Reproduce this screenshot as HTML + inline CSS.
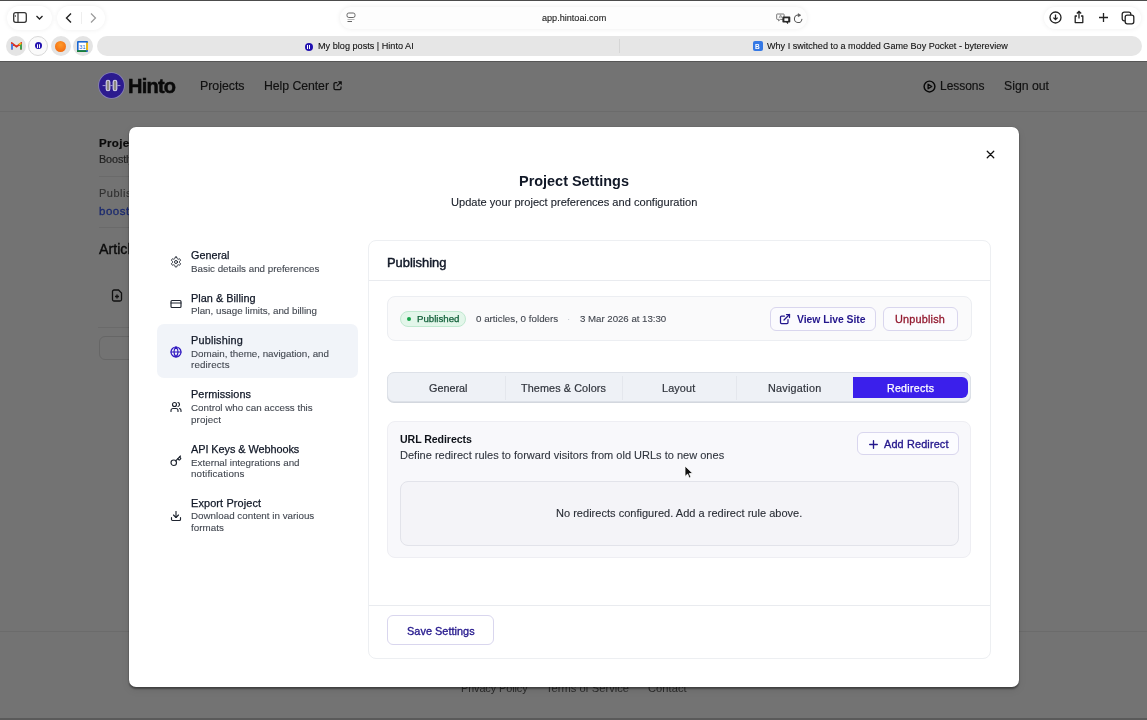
<!DOCTYPE html>
<html><head><meta charset="utf-8">
<style>
*{box-sizing:border-box;margin:0;padding:0}
html,body{width:1147px;height:720px;overflow:hidden;background:#737373;font-family:"Liberation Sans",sans-serif}
body{position:relative}
.t{position:absolute;white-space:nowrap;line-height:1;will-change:transform}
svg{display:block}
</style></head><body>
<div style="position:absolute;left:0;top:0;width:1147px;height:61px;background:#fff"></div>
<div style="position:absolute;left:0;top:0;width:1147px;height:1px;background:#4c4c4c"></div>
<div style="position:absolute;left:0;top:61px;width:1147px;height:1px;background:#565656"></div>
<div style="position:absolute;left:7px;top:6px;width:45px;height:24px;border-radius:12px;background:#fff;box-shadow:0 0 5px rgba(0,0,0,.07)"></div>
<div style="position:absolute;left:57px;top:6px;width:48px;height:24px;border-radius:12px;background:#fff;box-shadow:0 0 5px rgba(0,0,0,.07)"></div>
<div style="position:absolute;left:340px;top:7px;width:467px;height:22px;border-radius:11px;background:#fdfdfd;box-shadow:0 0 5px rgba(0,0,0,.08)"></div>
<div style="position:absolute;left:1044px;top:7px;width:97px;height:22px;border-radius:11px;background:#fff;box-shadow:0 0 5px rgba(0,0,0,.07)"></div>
<svg style="position:absolute;left:12px;top:11px;" width="16" height="13" viewBox="0 0 16 13" fill="none"><rect x="1.7" y="1.7" width="12.6" height="9.6" rx="2" stroke="#333" stroke-width="1.3"/><line x1="6" y1="2" x2="6" y2="11" stroke="#333" stroke-width="1.2"/><line x1="3.3" y1="4" x2="3.3" y2="6" stroke="#333" stroke-width=".8"/></svg>
<svg style="position:absolute;left:35px;top:14px;" width="9" height="7" viewBox="0 0 9 7" fill="none"><path d="M1.5 2l3 3 3-3" stroke="#222" stroke-width="1.3" fill="none"/></svg>
<svg style="position:absolute;left:64px;top:12px;" width="9" height="12" viewBox="0 0 9 12" fill="none"><path d="M7 1.5L2.5 6 7 10.5" stroke="#222" stroke-width="1.4" fill="none"/></svg>
<div style="position:absolute;left:81px;top:12px;width:1px;height:12px;background:#eee"></div>
<svg style="position:absolute;left:89px;top:12px;" width="9" height="12" viewBox="0 0 9 12" fill="none"><path d="M2 1.5L6.5 6 2 10.5" stroke="#999" stroke-width="1.2" fill="none"/></svg>
<svg style="position:absolute;left:346px;top:12px;" width="10" height="11" viewBox="0 0 10 11" fill="none"><rect x="1" y="1" width="8" height="4.5" rx="1.8" stroke="#666" stroke-width="1"/><line x1="1.5" y1="7.5" x2="8.5" y2="7.5" stroke="#aaa" stroke-width=".8"/><line x1="1.5" y1="9.5" x2="6" y2="9.5" stroke="#666" stroke-width="1"/></svg>
<div class="t" style="left:541.80px;top:14px;font-size:9.11px;color:#1a1a1a;-webkit-text-stroke:0.1px #1a1a1a;">app.hintoai.com</div>
<svg style="position:absolute;left:776px;top:12.5px;" width="15" height="11" viewBox="0 0 15 11" fill="none"><path d="M1.3 1h6.2a.6.6 0 0 1 .6.6v4.2a.6.6 0 0 1-.6.6H4.3L2.6 7.9V6.4H1.3a.6.6 0 0 1-.6-.6V1.6a.6.6 0 0 1 .6-.6z" stroke="#666" stroke-width=".9" fill="#fff"/><path d="M3 5.2l1.6-3.4 1.6 3.4M3.6 4h2" stroke="#666" stroke-width=".6" fill="none"/><path d="M7.2 3.6h6.3a.8.8 0 0 1 .8.8v4.4a.8.8 0 0 1-.8.8h-1.4v1.7l-1.9-1.7H7.2a.8.8 0 0 1-.8-.8V4.4a.8.8 0 0 1 .8-.8z" fill="#2a2a2a"/><rect x="8.4" y="5.3" width="3.8" height="2.6" fill="#fff"/></svg>
<svg style="position:absolute;left:792.5px;top:12.5px;" width="11" height="11" viewBox="0 0 11 11" fill="none"><path d="M8.9 6.2A3.75 3.75 0 1 1 5.5 2.1" stroke="#555" stroke-width="1.05" fill="none" stroke-linecap="round"/><path d="M5.2 0.6l2.6 1.6-2.6 1.6z" fill="#555" stroke="#555" stroke-width=".5" stroke-linejoin="round"/></svg>
<svg style="position:absolute;left:1049px;top:11px;" width="13" height="13" viewBox="0 0 13 13" fill="none"><circle cx="6.5" cy="6.5" r="5.5" stroke="#222" stroke-width="1.3"/><path d="M6.5 3.5v5M4.4 6.6l2.1 2.1 2.1-2.1" stroke="#222" stroke-width="1.3" fill="none"/></svg>
<svg style="position:absolute;left:1073px;top:10px;" width="12" height="14" viewBox="0 0 12 14" fill="none"><path d="M4 6H2.2v6.6h7.6V6H8" stroke="#222" stroke-width="1.3" fill="none" stroke-linejoin="round"/><path d="M6 8.5V1.5M3.8 3.5L6 1.3l2.2 2.2" stroke="#222" stroke-width="1.3" fill="none"/></svg>
<svg style="position:absolute;left:1098px;top:12px;" width="11" height="11" viewBox="0 0 11 11" fill="none"><path d="M5.5 1v9M1 5.5h9" stroke="#222" stroke-width="1.3"/></svg>
<svg style="position:absolute;left:1121px;top:11px;" width="14" height="14" viewBox="0 0 14 14" fill="none"><rect x="1.2" y="1.2" width="8.6" height="8.6" rx="2" stroke="#222" stroke-width="1.3"/><rect x="4.2" y="4.2" width="8.6" height="8.6" rx="2" fill="#fff" stroke="#222" stroke-width="1.3"/></svg>
<div style="position:absolute;left:6px;top:35.5px;width:20px;height:20px;border-radius:50%;background:#e4e4e4"></div>
<svg style="position:absolute;left:11px;top:41.5px;" width="11" height="8" viewBox="0 0 11 8" fill="none"><path d="M1 7.5V1.3l4.5 3.4L10 1.3v6.2" stroke="#d93025" stroke-width="1.8" fill="none"/><path d="M1 7.5V2" stroke="#4285f4" stroke-width="1.8"/><path d="M10 7.5V2" stroke="#34a853" stroke-width="1.8"/><path d="M10 1.3L8 2.8" stroke="#fbbc04" stroke-width="1.8"/></svg>
<div style="position:absolute;left:28px;top:35.5px;width:20px;height:20px;border-radius:50%;background:#fafafa;border:1px solid #d9d9d9"></div>
<div style="position:absolute;left:34.5px;top:41.8px;width:7.5px;height:7.5px;border-radius:50%;background:#2010b0"></div>
<div style="position:absolute;left:36.6px;top:43.6px;width:1.3px;height:4px;border-radius:1px;background:#fff"></div>
<div style="position:absolute;left:38.8px;top:43.6px;width:1.3px;height:4px;border-radius:1px;background:#fff"></div>
<div style="position:absolute;left:50.5px;top:35.5px;width:20px;height:20px;border-radius:50%;background:#e4e4e4"></div>
<div style="position:absolute;left:55px;top:40.5px;width:11px;height:11px;border-radius:50%;background:radial-gradient(circle at 50% 35%,#ff9a2a,#f0600a)"></div>
<div style="position:absolute;left:72.5px;top:35.5px;width:20px;height:20px;border-radius:50%;background:#e4e4e4"></div>
<svg style="position:absolute;left:77px;top:40.5px;" width="11" height="11" viewBox="0 0 11 11" fill="none"><rect x="0" y="0" width="11" height="11" rx="1" fill="#1967d2"/><rect x="1.6" y="1.6" width="7.6" height="7.6" fill="#fff"/><rect x="9.2" y="1.6" width="1.8" height="7.6" fill="#fbbc04"/><rect x="0" y="9.2" width="9.2" height="1.8" fill="#188038"/><text x="5.4" y="7.8" font-size="5.5" text-anchor="middle" fill="#1967d2" font-family="Liberation Sans">31</text></svg>
<div style="position:absolute;left:97px;top:35.5px;width:1045px;height:20.5px;border-radius:10.5px;background:#e6e6e6"></div>
<div style="position:absolute;left:619px;top:39px;width:1px;height:14px;background:#d6d6d6"></div>
<div style="position:absolute;left:304.7px;top:42.7px;width:8px;height:8px;border-radius:50%;background:#2010b0"></div>
<div style="position:absolute;left:306.9px;top:44.7px;width:1.2px;height:4px;background:#fff"></div>
<div style="position:absolute;left:309.2px;top:44.7px;width:1.2px;height:4px;background:#fff"></div>
<div class="t" style="left:317.70px;top:42px;font-size:9.14px;color:#111;-webkit-text-stroke:0.1px #111;">My blog posts | Hinto AI</div>
<div style="position:absolute;left:752.5px;top:41.2px;width:10.6px;height:10.2px;border-radius:2px;background:#3478e5"></div>
<div class="t" style="left:755.20px;top:44px;font-size:6.50px;color:#fff;font-weight:700;">B</div>
<div class="t" style="left:767.40px;top:42px;font-size:9.07px;color:#111;-webkit-text-stroke:0.1px #111;">Why I switched to a modded Game Boy Pocket - bytereview</div>
<div style="position:absolute;left:0;top:62px;width:1147px;height:656px;background:#737373"></div>
<div style="position:absolute;left:0;top:718px;width:1147px;height:2px;background:#5a5a5a"></div>
<div style="position:absolute;left:0;top:111px;width:1147px;height:1px;background:#6b6b6b"></div>
<div style="position:absolute;left:98.8px;top:73.3px;width:24.8px;height:24.8px;border-radius:50%;background:#2c1b8f;box-shadow:0 0 0 .8px #8780b8"></div>
<svg style="position:absolute;left:101px;top:77px;" width="21" height="17" viewBox="0 0 21 17" fill="none"><rect x="5.2" y="3.2" width="3.6" height="10.6" rx="1.8" fill="#8c8a80" stroke="#d8d4ee" stroke-width="1.1"/><rect x="12.2" y="3.2" width="3.6" height="10.6" rx="1.8" fill="#8c8a80" stroke="#d8d4ee" stroke-width="1.1"/><path d="M1.6 8.6h3.1M9.3 8.6h2.4M16.3 8.6h3.1" stroke="#a49fd0" stroke-width="1"/></svg>
<div class="t" style="left:128.30px;top:76px;font-size:20.00px;color:#0a0a0a;font-weight:700;letter-spacing:-0.774px;-webkit-text-stroke:0.5px #0a0a0a;">Hinto</div>
<div class="t" style="left:200.40px;top:80px;font-size:12.40px;color:#111;letter-spacing:-0.028px;-webkit-text-stroke:0.15px #111;">Projects</div>
<div class="t" style="left:264.00px;top:80px;font-size:12.30px;color:#111;letter-spacing:-0.063px;-webkit-text-stroke:0.15px #111;">Help Center</div>
<svg style="position:absolute;left:333px;top:80.8px;" width="10" height="10" viewBox="0 0 10 10" fill="none"><path d="M4.3 1.6H2.3a1.3 1.3 0 0 0-1.3 1.3v4.4a1.3 1.3 0 0 0 1.3 1.3h4.4a1.3 1.3 0 0 0 1.3-1.3V5.4" stroke="#111" stroke-width="1.3" fill="none"/><path d="M3.9 5.2L8 1.1" stroke="#111" stroke-width="1.2"/><path d="M5.4 0.6h3.1v3.1z" fill="#111" stroke="#111" stroke-width=".6" stroke-linejoin="round"/></svg>
<svg style="position:absolute;left:923.3px;top:80px;" width="13" height="13" viewBox="0 0 13 13" fill="none"><circle cx="6.5" cy="6.5" r="5.4" stroke="#0a0a0a" stroke-width="1.45"/><path d="M5.1 4.2v4.6l3.6-2.3z" stroke="#0a0a0a" stroke-width="1.3" fill="none" stroke-linejoin="round"/></svg>
<div class="t" style="left:939.80px;top:80px;font-size:12.00px;color:#111;letter-spacing:-0.033px;-webkit-text-stroke:0.15px #111;">Lessons</div>
<div class="t" style="left:1004.00px;top:80px;font-size:12.30px;color:#111;letter-spacing:-0.019px;-webkit-text-stroke:0.15px #111;">Sign out</div>
<div class="t" style="left:99.00px;top:138px;font-size:11.50px;color:#0a0a0a;font-weight:700;-webkit-text-stroke:0.2px #0a0a0a;letter-spacing:.35px;">Project Details</div>
<div class="t" style="left:99.00px;top:154px;font-size:10.80px;color:#202020;-webkit-text-stroke:0.15px #202020;letter-spacing:-.1px;">Boostly</div>
<div style="position:absolute;left:99px;top:176px;width:60px;height:1px;background:#6a6a6a"></div>
<div class="t" style="left:99.00px;top:188px;font-size:11.00px;color:#303030;-webkit-text-stroke:0.1px #303030;letter-spacing:.5px;">Published</div>
<div class="t" style="left:99.00px;top:206px;font-size:11.50px;color:#1b2a6e;-webkit-text-stroke:0.3px #1b2a6e;letter-spacing:.5px;">boostly</div>
<div style="position:absolute;left:99px;top:227px;width:60px;height:1px;background:#6a6a6a"></div>
<div class="t" style="left:99.00px;top:242px;font-size:14.20px;color:#0c0c0c;-webkit-text-stroke:0.4px #0c0c0c;">Articles</div>
<svg style="position:absolute;left:111px;top:289px;" width="12" height="13" viewBox="0 0 12 13" fill="none"><path d="M1.5 2.5a1.5 1.5 0 0 1 1.5-1.5h4.5l3 3v6.5a1.5 1.5 0 0 1-1.5 1.5H3a1.5 1.5 0 0 1-1.5-1.5z" stroke="#111" stroke-width="1.3" fill="none"/><path d="M6 5.5v4M4 7.5h4" stroke="#111" stroke-width="1.3"/></svg>
<div style="position:absolute;left:98px;top:327px;width:60px;height:1px;background:#6a6a6a"></div>
<div style="position:absolute;left:98.5px;top:336px;width:60px;height:24px;border-radius:6px;border:1px solid #666"></div>
<div style="position:absolute;left:0;top:631px;width:1147px;height:1px;background:#6b6b6b"></div>
<div class="t" style="left:461.30px;top:683px;font-size:10.90px;color:#2a2a2a;letter-spacing:-0.088px;">Privacy Policy</div>
<div class="t" style="left:545.90px;top:683px;font-size:11.10px;color:#2a2a2a;letter-spacing:0.023px;">Terms of Service</div>
<div class="t" style="left:647.80px;top:683px;font-size:11.10px;color:#2a2a2a;letter-spacing:0.058px;">Contact</div>
<div style="position:absolute;left:129px;top:126.5px;width:890px;height:560.5px;background:#fff;border-radius:7px;box-shadow:0 1.5px 2px rgba(0,0,0,.4),0 0 1px rgba(0,0,0,.35),0 3px 8px rgba(0,0,0,.08)"></div>
<svg style="position:absolute;left:984px;top:147.5px;" width="13" height="13" viewBox="0 0 24 24" fill="none"><path d="M18 6L6 18M6 6l12 12" stroke="#111" stroke-width="2.4" stroke-linecap="round"/></svg>
<div class="t" style="left:518.80px;top:174px;font-size:14.45px;color:#111827;font-weight:700;letter-spacing:-0.000px;">Project Settings</div>
<div class="t" style="left:450.60px;top:197px;font-size:11.08px;color:#1b202a;letter-spacing:0.001px;-webkit-text-stroke:0.12px #1b202a;">Update your project preferences and configuration</div>
<div style="position:absolute;left:157.3px;top:324.4px;width:201px;height:54.1px;border-radius:7px;background:#f1f4f9"></div>
<svg style="position:absolute;left:169.8px;top:255.8px;" width="12" height="12" viewBox="0 0 24 24" fill="none"><path d="M12.22 2h-.44a2 2 0 0 0-2 2v.18a2 2 0 0 1-1 1.73l-.43.25a2 2 0 0 1-2 0l-.15-.08a2 2 0 0 0-2.73.73l-.22.38a2 2 0 0 0 .73 2.73l.15.1a2 2 0 0 1 1 1.72v.51a2 2 0 0 1-1 1.74l-.15.09a2 2 0 0 0-.73 2.73l.22.38a2 2 0 0 0 2.73.73l.15-.08a2 2 0 0 1 2 0l.43.25a2 2 0 0 1 1 1.73V20a2 2 0 0 0 2 2h.44a2 2 0 0 0 2-2v-.18a2 2 0 0 1 1-1.73l.43-.25a2 2 0 0 1 2 0l.15.08a2 2 0 0 0 2.73-.73l.22-.39a2 2 0 0 0-.73-2.73l-.15-.08a2 2 0 0 1-1-1.74v-.5a2 2 0 0 1 1-1.74l.15-.09a2 2 0 0 0 .73-2.73l-.22-.38a2 2 0 0 0-2.73-.73l-.15.08a2 2 0 0 1-2 0l-.43-.25a2 2 0 0 1-1-1.73V4a2 2 0 0 0-2-2z" stroke="#1f2530" stroke-width="1.9" stroke-linecap="round" stroke-linejoin="round" fill="none"/><circle cx="12" cy="12" r="3" stroke="#1f2530" stroke-width="1.9" stroke-linecap="round" stroke-linejoin="round" fill="none"/></svg>
<svg style="position:absolute;left:169.9px;top:298.2px;" width="12" height="12" viewBox="0 0 24 24" fill="none"><rect x="2" y="5" width="20" height="14" rx="2" stroke="#1f2530" stroke-width="2.3" stroke-linecap="round" stroke-linejoin="round" fill="none"/><line x1="2" x2="22" y1="10" y2="10" stroke="#1f2530" stroke-width="2.3" stroke-linecap="round" stroke-linejoin="round" fill="none"/></svg>
<svg style="position:absolute;left:169.7px;top:346.4px;" width="12" height="12" viewBox="0 0 24 24" fill="none"><circle cx="12" cy="12" r="10" stroke="#2e16c0" stroke-width="2.4" stroke-linecap="round" stroke-linejoin="round" fill="none"/><path d="M12 2a14.5 14.5 0 0 0 0 20 14.5 14.5 0 0 0 0-20" stroke="#2e16c0" stroke-width="2.4" stroke-linecap="round" stroke-linejoin="round" fill="none"/><path d="M2 12h20" stroke="#2e16c0" stroke-width="2.4" stroke-linecap="round" stroke-linejoin="round" fill="none"/></svg>
<svg style="position:absolute;left:170px;top:400.7px;" width="12" height="12" viewBox="0 0 24 24" fill="none"><path d="M16 21v-2a4 4 0 0 0-4-4H6a4 4 0 0 0-4 4v2" stroke="#1f2530" stroke-width="2.3" stroke-linecap="round" stroke-linejoin="round" fill="none"/><circle cx="9" cy="7" r="4" stroke="#1f2530" stroke-width="2.3" stroke-linecap="round" stroke-linejoin="round" fill="none"/><path d="M22 21v-2a4 4 0 0 0-3-3.87" stroke="#1f2530" stroke-width="2.3" stroke-linecap="round" stroke-linejoin="round" fill="none"/><path d="M16 3.13a4 4 0 0 1 0 7.75" stroke="#1f2530" stroke-width="2.3" stroke-linecap="round" stroke-linejoin="round" fill="none"/></svg>
<svg style="position:absolute;left:169.7px;top:455px;" width="12" height="12" viewBox="0 0 24 24" fill="none"><path d="m15.5 7.5 2.3 2.3a1 1 0 0 0 1.4 0l2.1-2.1a1 1 0 0 0 0-1.4L19 4" stroke="#1f2530" stroke-width="2.3" stroke-linecap="round" stroke-linejoin="round" fill="none"/><path d="m21 2-9.6 9.6" stroke="#1f2530" stroke-width="2.3" stroke-linecap="round" stroke-linejoin="round" fill="none"/><circle cx="7.5" cy="15.5" r="5.5" stroke="#1f2530" stroke-width="2.3" stroke-linecap="round" stroke-linejoin="round" fill="none"/></svg>
<svg style="position:absolute;left:170px;top:509.5px;" width="12" height="12" viewBox="0 0 24 24" fill="none"><path d="M21 15v4a2 2 0 0 1-2 2H5a2 2 0 0 1-2-2v-4" stroke="#1f2530" stroke-width="2.3" stroke-linecap="round" stroke-linejoin="round" fill="none"/><polyline points="7 10 12 15 17 10" stroke="#1f2530" stroke-width="2.3" stroke-linecap="round" stroke-linejoin="round" fill="none"/><line x1="12" x2="12" y1="15" y2="3" stroke="#1f2530" stroke-width="2.3" stroke-linecap="round" stroke-linejoin="round" fill="none"/></svg>
<div class="t" style="left:191.25px;top:250px;font-size:10.80px;color:#111827;letter-spacing:0.013px;-webkit-text-stroke:0.25px #111827;">General</div>
<div class="t" style="left:191.25px;top:264px;font-size:9.80px;color:#41464f;letter-spacing:-0.002px;-webkit-text-stroke:0.1px #41464f;">Basic details and preferences</div>
<div class="t" style="left:191.25px;top:293px;font-size:10.90px;color:#111827;letter-spacing:0.029px;-webkit-text-stroke:0.25px #111827;">Plan &amp; Billing</div>
<div class="t" style="left:191.25px;top:306px;font-size:9.80px;color:#41464f;letter-spacing:-0.013px;-webkit-text-stroke:0.1px #41464f;">Plan, usage limits, and billing</div>
<div class="t" style="left:191.25px;top:335px;font-size:10.90px;color:#111827;letter-spacing:0.178px;-webkit-text-stroke:0.25px #111827;">Publishing</div>
<div class="t" style="left:191.25px;top:349px;font-size:9.80px;color:#41464f;letter-spacing:-0.013px;-webkit-text-stroke:0.1px #41464f;">Domain, theme, navigation, and</div>
<div class="t" style="left:191.25px;top:360px;font-size:9.80px;color:#41464f;letter-spacing:0.128px;-webkit-text-stroke:0.1px #41464f;">redirects</div>
<div class="t" style="left:191.25px;top:389px;font-size:10.90px;color:#111827;letter-spacing:0.064px;-webkit-text-stroke:0.25px #111827;">Permissions</div>
<div class="t" style="left:191.25px;top:403px;font-size:9.80px;color:#41464f;letter-spacing:-0.012px;-webkit-text-stroke:0.1px #41464f;">Control who can access this</div>
<div class="t" style="left:191.25px;top:415px;font-size:9.80px;color:#41464f;letter-spacing:0.098px;-webkit-text-stroke:0.1px #41464f;">project</div>
<div class="t" style="left:191.25px;top:444px;font-size:10.90px;color:#111827;letter-spacing:-0.059px;-webkit-text-stroke:0.25px #111827;">API Keys &amp; Webhooks</div>
<div class="t" style="left:191.25px;top:458px;font-size:9.80px;color:#41464f;letter-spacing:0.008px;-webkit-text-stroke:0.1px #41464f;">External integrations and</div>
<div class="t" style="left:191.25px;top:469px;font-size:9.80px;color:#41464f;letter-spacing:0.146px;-webkit-text-stroke:0.1px #41464f;">notifications</div>
<div class="t" style="left:191.25px;top:498px;font-size:10.90px;color:#111827;letter-spacing:0.134px;-webkit-text-stroke:0.25px #111827;">Export Project</div>
<div class="t" style="left:191.25px;top:511px;font-size:9.80px;color:#41464f;letter-spacing:0.007px;-webkit-text-stroke:0.1px #41464f;">Download content in various</div>
<div class="t" style="left:191.25px;top:523px;font-size:9.80px;color:#41464f;letter-spacing:0.021px;-webkit-text-stroke:0.1px #41464f;">formats</div>
<div style="position:absolute;left:368.3px;top:240.2px;width:622.5px;height:418.5px;border-radius:8px;border:1px solid #edeff2;background:#fff"></div>
<div style="position:absolute;left:369px;top:280px;width:621px;height:1px;background:#e9ebef"></div>
<div style="position:absolute;left:369px;top:605px;width:621px;height:1px;background:#e9ebef"></div>
<div class="t" style="left:386.80px;top:257px;font-size:12.90px;color:#111827;letter-spacing:-0.014px;-webkit-text-stroke:0.45px #111827;">Publishing</div>
<div style="position:absolute;left:387.2px;top:296.3px;width:585px;height:44.4px;border-radius:8px;border:1px solid #eceef2;background:#fafafb"></div>
<div style="position:absolute;left:400px;top:310.5px;width:65.8px;height:16.2px;border-radius:9px;border:1px solid #c0e9d0;background:#e3f6ea"></div>
<div style="position:absolute;left:407.3px;top:317px;width:4px;height:4px;border-radius:50%;background:#16a34a"></div>
<div class="t" style="left:416.70px;top:314px;font-size:9.70px;color:#12603a;letter-spacing:-0.013px;-webkit-text-stroke:0.25px #12603a;">Published</div>
<div class="t" style="left:475.70px;top:314px;font-size:9.80px;color:#40454e;letter-spacing:-0.002px;-webkit-text-stroke:0.1px #40454e;">0 articles, 0 folders</div>
<div class="t" style="left:567.30px;top:314px;font-size:9.80px;color:#c4c8d0;">·</div>
<div class="t" style="left:579.70px;top:314px;font-size:9.70px;color:#40454e;letter-spacing:-0.029px;-webkit-text-stroke:0.1px #40454e;">3 Mar 2026 at 13:30</div>
<div style="position:absolute;left:769.6px;top:306.5px;width:106.1px;height:24.4px;border-radius:6px;border:1px solid #d9d6ee;background:#fbfbfe"></div>
<svg style="position:absolute;left:779.3px;top:313.4px;" width="12" height="12" viewBox="0 0 24 24" fill="none"><path d="M15 3h6v6" stroke="#23168c" stroke-width="2.5" stroke-linecap="round" stroke-linejoin="round" fill="none"/><path d="M10 14 21 3" stroke="#23168c" stroke-width="2.5" stroke-linecap="round" fill="none"/><path d="M18 13v6a2 2 0 0 1-2 2H5a2 2 0 0 1-2-2V8a2 2 0 0 1 2-2h6" stroke="#23168c" stroke-width="2.5" stroke-linecap="round" stroke-linejoin="round" fill="none"/></svg>
<div class="t" style="left:797.00px;top:315px;font-size:10.40px;color:#23168c;font-weight:700;letter-spacing:-0.044px;">View Live Site</div>
<div style="position:absolute;left:882.5px;top:306.5px;width:75.8px;height:24.4px;border-radius:6px;border:1px solid #d9d6ee;background:#fbfbfe"></div>
<div class="t" style="left:895.30px;top:314px;font-size:10.90px;color:#931a30;letter-spacing:0.178px;-webkit-text-stroke:0.3px #931a30;">Unpublish</div>
<div style="position:absolute;left:387.3px;top:372.3px;width:584px;height:29.8px;border-radius:7px;border:1px solid #dde1e8;background:#eef1f6;box-shadow:0 1px 0.5px #d3d7de"></div>
<div style="position:absolute;left:505.4px;top:375.6px;width:1px;height:24.4px;background:#e4e7ed"></div>
<div style="position:absolute;left:621.6px;top:375.6px;width:1px;height:24.4px;background:#e4e7ed"></div>
<div style="position:absolute;left:736.4px;top:375.6px;width:1px;height:24.4px;background:#e4e7ed"></div>
<div style="position:absolute;left:852.7px;top:376.8px;width:115px;height:21.5px;border-radius:0 6px 6px 0;background:#3b1feb"></div>
<div class="t" style="left:428.80px;top:383px;font-size:10.80px;color:#30343c;letter-spacing:0.013px;-webkit-text-stroke:0.2px #30343c;">General</div>
<div class="t" style="left:521.00px;top:383px;font-size:10.80px;color:#30343c;letter-spacing:0.112px;-webkit-text-stroke:0.2px #30343c;">Themes &amp; Colors</div>
<div class="t" style="left:662.30px;top:383px;font-size:10.80px;color:#30343c;letter-spacing:0.155px;-webkit-text-stroke:0.2px #30343c;">Layout</div>
<div class="t" style="left:767.60px;top:383px;font-size:10.80px;color:#30343c;letter-spacing:0.252px;-webkit-text-stroke:0.2px #30343c;">Navigation</div>
<div class="t" style="left:886.70px;top:383px;font-size:10.60px;color:#ffffff;letter-spacing:0.291px;-webkit-text-stroke:0.25px #ffffff;">Redirects</div>
<div style="position:absolute;left:387.1px;top:421.3px;width:584.3px;height:137.2px;border-radius:8px;border:1px solid #eeeef3;background:#f8f8fb"></div>
<div class="t" style="left:400.40px;top:434px;font-size:10.60px;color:#0f131a;font-weight:700;letter-spacing:-0.079px;">URL Redirects</div>
<div class="t" style="left:400.40px;top:450px;font-size:11.00px;color:#30353e;letter-spacing:0.011px;-webkit-text-stroke:0.1px #30353e;">Define redirect rules to forward visitors from old URLs to new ones</div>
<div style="position:absolute;left:857.3px;top:431.5px;width:101.5px;height:23.9px;border-radius:6px;border:1px solid #d9d6ee;background:#fcfcff"></div>
<svg style="position:absolute;left:866.6px;top:437.6px;" width="13" height="13" viewBox="0 0 24 24" fill="none"><path d="M5 12h14M12 5v14" stroke="#23168c" stroke-width="2.5" stroke-linecap="round"/></svg>
<div class="t" style="left:884.20px;top:439px;font-size:10.90px;color:#23168c;letter-spacing:0.135px;-webkit-text-stroke:0.32px #23168c;">Add Redirect</div>
<div style="position:absolute;left:400.4px;top:481.2px;width:558.4px;height:64.8px;border-radius:8px;border:1px solid #e2e3ea;background:#f4f4f8"></div>
<div class="t" style="left:555.90px;top:508px;font-size:11.00px;color:#2b2f37;letter-spacing:0.022px;-webkit-text-stroke:0.12px #2b2f37;">No redirects configured. Add a redirect rule above.</div>
<div style="position:absolute;left:387px;top:615.3px;width:106.6px;height:30.2px;border-radius:6px;border:1px solid #d9d6ee;background:#fff"></div>
<div class="t" style="left:406.70px;top:626px;font-size:10.90px;color:#23168c;letter-spacing:0.037px;-webkit-text-stroke:0.32px #23168c;">Save Settings</div>
<svg style="position:absolute;left:684px;top:465.3px;" width="10" height="14" viewBox="0 0 10 14" fill="none"><path d="M1 1v10.5l2.6-2.4 1.7 3.9 1.7-.7-1.7-3.8H8.8z" fill="#111" stroke="#fff" stroke-width=".8"/></svg>
</body></html>
